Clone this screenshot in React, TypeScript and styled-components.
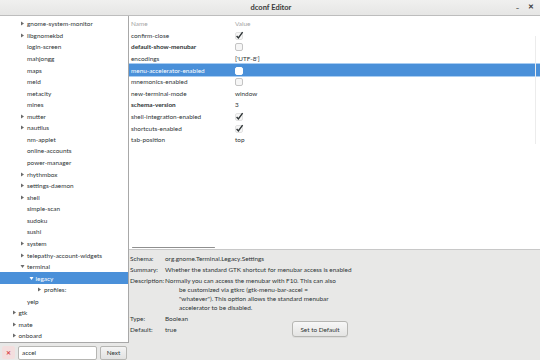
import { FC } from "react"
import styled, { createGlobalStyle } from "styled-components"

const GlobalStyle = createGlobalStyle`
  html, body {
    margin: 0;
    padding: 0;
    background: #e8e8e7;
  }
  * {
    box-sizing: border-box;
  }
`

type TreeItem = { label: string; depth: number; arrow?: "right" | "down"; selected?: boolean }

const tree: TreeItem[] = [
  { label: "gnome-system-monitor", depth: 2, arrow: "right" },
  { label: "libgnomekbd", depth: 2, arrow: "right" },
  { label: "login-screen", depth: 2 },
  { label: "mahjongg", depth: 2 },
  { label: "maps", depth: 2 },
  { label: "meld", depth: 2 },
  { label: "metacity", depth: 2 },
  { label: "mines", depth: 2 },
  { label: "mutter", depth: 2, arrow: "right" },
  { label: "nautilus", depth: 2, arrow: "right" },
  { label: "nm-applet", depth: 2 },
  { label: "online-accounts", depth: 2 },
  { label: "power-manager", depth: 2 },
  { label: "rhythmbox", depth: 2, arrow: "right" },
  { label: "settings-daemon", depth: 2, arrow: "right" },
  { label: "shell", depth: 2, arrow: "right" },
  { label: "simple-scan", depth: 2 },
  { label: "sudoku", depth: 2 },
  { label: "sushi", depth: 2 },
  { label: "system", depth: 2, arrow: "right" },
  { label: "telepathy-account-widgets", depth: 2, arrow: "right" },
  { label: "terminal", depth: 2, arrow: "down" },
  { label: "legacy", depth: 3, arrow: "down", selected: true },
  { label: "profiles:", depth: 4, arrow: "right" },
  { label: "yelp", depth: 2 },
  { label: "gtk", depth: 1, arrow: "right" },
  { label: "mate", depth: 1, arrow: "right" },
  { label: "onboard", depth: 1, arrow: "right" },
]

type KeyRow = { name: string; bold?: boolean; value: string | boolean; selected?: boolean }

const keys: KeyRow[] = [
  { name: "confirm-close", value: true },
  { name: "default-show-menubar", bold: true, value: false },
  { name: "encodings", value: "['UTF-8']" },
  { name: "menu-accelerator-enabled", value: false, selected: true },
  { name: "mnemonics-enabled", value: false },
  { name: "new-terminal-mode", value: "window" },
  { name: "schema-version", bold: true, value: "3" },
  { name: "shell-integration-enabled", value: true },
  { name: "shortcuts-enabled", value: true },
  { name: "tab-position", value: "top" },
]

const Check: FC<{ checked: boolean; selected?: boolean }> = ({ checked, selected }) => (
  <svg width="9" height="9" viewBox="0 0 9 9">
    <rect
      x="0.5"
      y="1.5"
      width="7"
      height="7"
      rx="1.5"
      fill={selected ? "#ffffff" : "#f6f6f6"}
      stroke={selected ? "#ffffff" : checked ? "#e2e2e2" : "#c4c4c4"}
    />
    {checked && (
      <path d="M1.6 5 L3.4 6.9 L7.6 1.2" fill="none" stroke="#2e3436" strokeWidth="1.4" />
    )}
  </svg>
)

const Arrow: FC<{ dir: "right" | "down"; light?: boolean }> = ({ dir, light }) => (
  <ArrowBox>
    <svg width="5" height="5" viewBox="0 0 5 5">
      {dir === "right" ? (
        <path d="M1 0.5 L4 2.5 L1 4.5 Z" fill={light ? "#ffffff" : "#6a6a6a"} />
      ) : (
        <path d="M0.5 1 L4.5 1 L2.5 4 Z" fill={light ? "#ffffff" : "#6a6a6a"} />
      )}
    </svg>
  </ArrowBox>
)

export default function App() {
  return (
    <>
      <GlobalStyle />
      <Window>
        <TitleBar>
          <Title>dconf Editor</Title>
          <TitleButtons>
            <Minimize>_</Minimize>
            <Close>✕</Close>
          </TitleButtons>
        </TitleBar>
        <Body>
          <Sidebar>
            <Tree>
              {tree.map((t) => (
                <TreeRow key={t.label} $depth={t.depth} $selected={t.selected}>
                  {t.arrow ? <Arrow dir={t.arrow} light={t.selected} /> : <ArrowBox />}
                  {t.label}
                </TreeRow>
              ))}
            </Tree>
            <SearchBar>
              <ClearButton>✕</ClearButton>
              <SearchEntry>accel</SearchEntry>
              <NextButton>Next</NextButton>
            </SearchBar>
          </Sidebar>
          <Main>
            <KeyList>
              <HeaderRow>
                <NameCell>Name</NameCell>
                <ValueCell>Value</ValueCell>
              </HeaderRow>
              {keys.map((k) => (
                <KeyItem key={k.name} $selected={k.selected}>
                  <NameCell $bold={k.bold}>{k.name}</NameCell>
                  <ValueCell>
                    {typeof k.value === "boolean" ? (
                      <Check checked={k.value} selected={k.selected} />
                    ) : (
                      k.value
                    )}
                  </ValueCell>
                </KeyItem>
              ))}
              <HScroll />
              <VScroll />
            </KeyList>
            <Details>
              <Label>Schema:</Label>
              <WideValue>org.gnome.Terminal.Legacy.Settings</WideValue>
              <Label>Summary:</Label>
              <WideValue>Whether the standard GTK shortcut for menubar access is enabled</WideValue>
              <Label>Description:</Label>
              <Description>
                Normally you can access the menubar with F10. This can also
                <br />
                be customized via gtkrc (gtk-menu-bar-accel =
                <br />
                "whatever"). This option allows the standard menubar
                <br />
                accelerator to be disabled.
              </Description>
              <Label>Type:</Label>
              <WideValue>Boolean</WideValue>
              <Label>Default:</Label>
              <Value>true</Value>
              <DefaultButton>Set to Default</DefaultButton>
            </Details>
          </Main>
        </Body>
      </Window>
    </>
  )
}

const Window = styled.div`
  width: 540px;
  height: 360px;
  display: flex;
  flex-direction: column;
  overflow: hidden;
  font-family: Lato, "Liberation Sans", sans-serif;
  font-size: 6.4px;
  color: #2e3436;
  background: #e8e8e7;
`

const TitleBar = styled.div`
  height: 16px;
  flex-shrink: 0;
  position: relative;
  display: flex;
  align-items: center;
  justify-content: center;
  background: linear-gradient(#f0f0ef, #e6e6e5);
  border-bottom: 1px solid #bdbdbd;
`

const Title = styled.div`
  font-size: 7.5px;
  font-weight: 700;
  color: #3a3a3a;
  margin-left: 2px;
`

const TitleButtons = styled.div`
  position: absolute;
  right: 6px;
  top: 3px;
  display: flex;
  gap: 9px;
  font-size: 6.5px;
  color: #3a3a3a;
`

const Minimize = styled.span`
  font-weight: 700;
  margin-top: -1px;
`

const Close = styled.span`
  font-weight: 700;
`

const Body = styled.div`
  flex: 1;
  display: flex;
  min-height: 0;
`

const Sidebar = styled.div`
  width: 129px;
  display: flex;
  flex-direction: column;
`

const Tree = styled.div`
  flex: 1;
  background: #ffffff;
  border-right: 1px solid #a8a8a8;
  border-bottom: 1px solid #a8a8a8;
  padding-top: 2px;
`

const TreeRow = styled.div<{ $depth: number; $selected?: boolean }>`
  height: 11.57px;
  display: flex;
  align-items: center;
  padding-left: ${(p) => 4 + p.$depth * 8.5}px;
  background: ${(p) => (p.$selected ? "#4a90d9" : "transparent")};
  color: ${(p) => (p.$selected ? "#ffffff" : "#2e3436")};
  white-space: nowrap;
`

const ArrowBox = styled.span`
  width: 7px;
  height: 5px;
  display: inline-flex;
  align-items: center;
  flex-shrink: 0;
  margin-left: -1px;
`

const SearchBar = styled.div`
  height: 17px;
  flex-shrink: 0;
  display: flex;
  align-items: center;
  padding: 2px 1px 0 2px;
  gap: 3px;
`

const ClearButton = styled.div`
  width: 13px;
  height: 13px;
  display: flex;
  align-items: center;
  justify-content: center;
  font-size: 6px;
  font-weight: 700;
  color: #d8484a;
  background: #f3dede;
  border-radius: 2px;
`

const SearchEntry = styled.div`
  width: 79px;
  height: 14px;
  display: flex;
  align-items: center;
  padding-left: 3px;
  background: #ffffff;
  border: 1px solid #b6b6b3;
  border-radius: 2px;
`

const NextButton = styled.div`
  width: 27px;
  height: 14px;
  display: flex;
  align-items: center;
  justify-content: center;
  background: linear-gradient(#f4f4f4, #e2e2e1);
  border: 1px solid #b6b6b3;
  border-radius: 2px;
`

const Main = styled.div`
  flex: 1;
  display: flex;
  flex-direction: column;
`

const KeyList = styled.div`
  height: 234px;
  position: relative;
  background: #ffffff;
  border-bottom: 1px solid #c8c8c8;
  padding-top: 2px;
`

const rowBase = `
  height: 11.6px;
  display: flex;
  align-items: center;
  padding-left: 2px;
`

const HeaderRow = styled.div`
  ${rowBase}
  color: #a4a4a4;
`

const KeyItem = styled.div<{ $selected?: boolean }>`
  ${rowBase}
  background: ${(p) => (p.$selected ? "#4a90d9" : "transparent")};
  color: ${(p) => (p.$selected ? "#ffffff" : "#2e3436")};
  box-shadow: ${(p) => (p.$selected ? "0 -1px 0 #a9cdf2, 0 1px 0 #a9cdf2" : "none")};
`

const NameCell = styled.div<{ $bold?: boolean }>`
  width: 104px;
  font-weight: ${(p) => (p.$bold ? 700 : 400)};
  white-space: nowrap;
`

const ValueCell = styled.div`
  display: flex;
  align-items: center;
`

const HScroll = styled.div`
  position: absolute;
  left: 3px;
  bottom: 1px;
  width: 83px;
  height: 1.5px;
  background: #8f8f8f;
  border-radius: 1px;
`

const VScroll = styled.div`
  position: absolute;
  right: 4px;
  top: 20px;
  width: 1px;
  height: 108px;
  background: #ececec;
`

const Details = styled.div`
  flex: 1;
  display: grid;
  grid-template-columns: 35px 127px 1fr;
  grid-auto-rows: min-content;
  row-gap: 2px;
  padding: 4px 0 0 1px;
  align-content: start;
`

const Label = styled.div`
  line-height: 9px;
`

const Value = styled.div`
  line-height: 9px;
`

const WideValue = styled(Value)`
  grid-column: 2 / -1;
  white-space: nowrap;
`

const Description = styled(Value)`
  grid-column: 2 / -1;
  white-space: nowrap;
  padding-left: 14px;
  text-indent: -14px;
`

const DefaultButton = styled.div`
  justify-self: start;
  margin-top: -4px;
  width: 56px;
  height: 16px;
  display: flex;
  align-items: center;
  justify-content: center;
  background: linear-gradient(#f7f7f7, #e4e4e3);
  border: 1px solid #b6b6b3;
  border-radius: 3px;
  box-shadow: 0 1px 0 rgba(0, 0, 0, 0.05);
`
